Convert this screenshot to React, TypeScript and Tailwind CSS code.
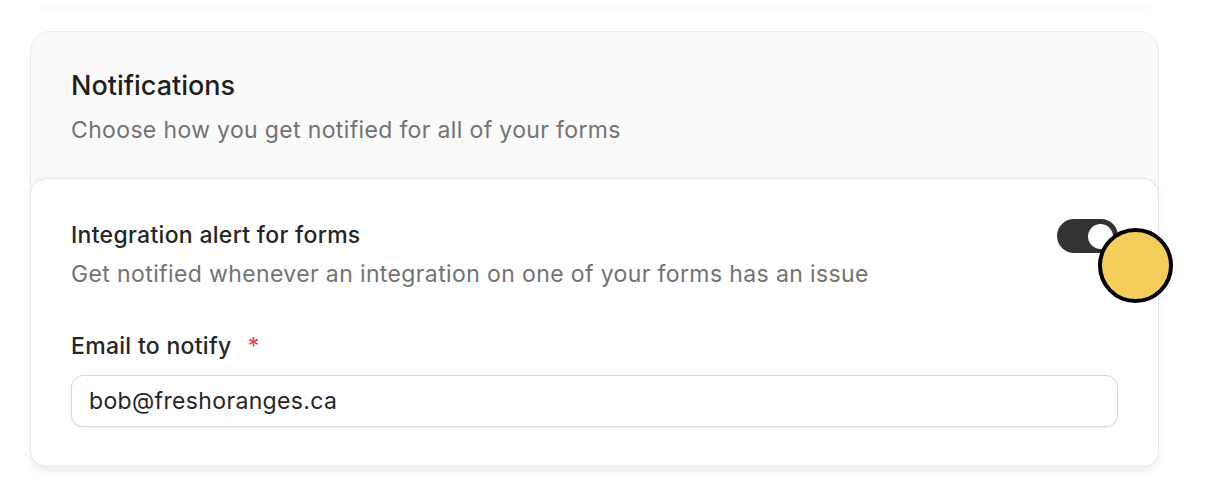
export default function App() {
  return (
    <div className="relative h-[504px] w-[1214px] overflow-hidden bg-white font-['Inter',sans-serif]">
      {/* bottom edge of the card above */}
      <div className="mx-[40px] h-[5px] w-[1110px] rounded-b-[16px] bg-white shadow-[0_4px_10px_rgba(0,0,0,0.05)]" />

      <div className="ml-[30px] mt-[26px] w-[1129px] rounded-[20px] border border-[#ececec] bg-[#fafafa]">
        <div className="px-[40px] pb-[34px] pt-[38px]">
          <h2 className="text-[27px] font-medium leading-[32px] text-[#1f1f1f]">Notifications</h2>
          <p className="mt-[14px] text-[23px] leading-[28px] tracking-[0.35px] text-[#737373]">
            Choose how you get notified for all of your forms
          </p>
        </div>

        <div className="-mx-px -mb-px rounded-[16px] border border-[#e6e6e6] bg-white px-[40px] pb-[39px] pt-[42px] shadow-[0_4px_10px_rgba(0,0,0,0.07)]">
          <div className="flex items-start justify-between">
            <div>
              <h3 className="text-[23px] font-medium leading-[28px] tracking-[0.3px] text-[#262626]">
                Integration alert for forms
              </h3>
              <p className="mt-[11px] text-[23px] leading-[28px] tracking-[0.38px] text-[#737373]">
                Get notified whenever an integration on one of your forms has an issue
              </p>
            </div>
            <div className="relative mt-[-2px]">
              <button className="flex h-[34px] w-[61px] items-center justify-end rounded-full bg-[#333333] px-[5px]">
                <span className="h-[25px] w-[25px] rounded-full bg-white" />
              </button>
              {/* cursor highlight */}
              <span className="absolute left-[41px] top-[9px] h-[75px] w-[75px] rounded-full border-[4px] border-black bg-[#f5cd5a]" />
            </div>
          </div>

          <label className="mt-[44px] flex items-center text-[23px] font-medium leading-[28px] tracking-[0.3px] text-[#262626]">
            Email to notify
            <span className="ml-[16px] text-[#e5484d]">*</span>
          </label>
          <input
            readOnly
            value="bob@freshoranges.ca"
            className="mt-[15px] h-[52px] w-full rounded-[12px] border border-[#d6d6d6] bg-white px-[17px] text-[23px] tracking-[0.35px] text-[#262626] shadow-[0_1px_2px_rgba(0,0,0,0.06)] outline-none"
          />
        </div>
      </div>
    </div>
  );
}
